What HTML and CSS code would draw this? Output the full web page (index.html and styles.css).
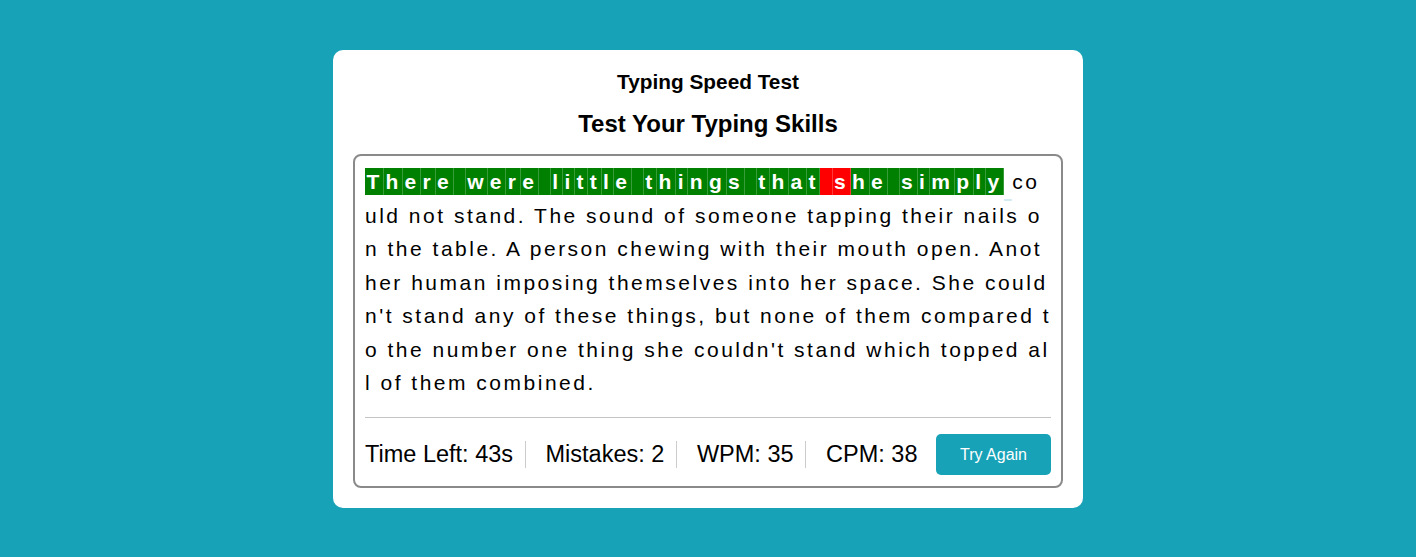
FILE: index.html
```html
<!DOCTYPE html>
<html lang="en">
<head>
<meta charset="utf-8">
<title>Typing Speed Test</title>
<link rel="stylesheet" href="styles.css">
</head>
<body>
<div class="wrapper">
  <h1 class="title">Typing Speed Test</h1>
  <h2 class="subtitle">Test Your Typing Skills</h2>
  <div class="content-box">
    <div class="typing-text">
      <p><span class="ok">T</span><span class="ok">h</span><span class="ok">e</span><span class="ok">r</span><span class="ok">e</span><span class="ok"> </span><span class="ok">w</span><span class="ok">e</span><span class="ok">r</span><span class="ok">e</span><span class="ok"> </span><span class="ok">l</span><span class="ok">i</span><span class="ok">t</span><span class="ok">t</span><span class="ok">l</span><span class="ok">e</span><span class="ok"> </span><span class="ok">t</span><span class="ok">h</span><span class="ok">i</span><span class="ok">n</span><span class="ok">g</span><span class="ok">s</span><span class="ok"> </span><span class="ok">t</span><span class="ok">h</span><span class="ok">a</span><span class="ok">t</span><span class="bad"> </span><span class="bad">s</span><span class="ok">h</span><span class="ok">e</span><span class="ok"> </span><span class="ok">s</span><span class="ok">i</span><span class="ok">m</span><span class="ok">p</span><span class="ok">l</span><span class="ok">y</span><span class="active"> </span>could not stand. The sound of someone tapping their nails on the table. A person chewing with their mouth open. Another human imposing themselves into her space. She couldn't stand any of these things, but none of them compared to the number one thing she couldn't stand which topped all of them combined.</p>
    </div>
    <div class="content">
      <ul class="result-details">
        <li>Time Left: <span>43</span>s</li>
        <li>Mistakes: <span>2</span></li>
        <li>WPM: <span>35</span></li>
        <li>CPM: <span>38</span></li>
      </ul>
      <button class="retry" type="button">Try Again</button>
    </div>
  </div>
</div>
</body>
</html>
```

FILE: styles.css
```css
* {
  margin: 0;
  padding: 0;
  box-sizing: border-box;
}

body {
  font-family: "Liberation Sans", Arial, sans-serif;
  background: #17a2b8;
  min-height: 100vh;
  padding-top: 1px;
  display: flex;
  align-items: center;
  justify-content: center;
  color: #000;
}

.wrapper {
  width: 750px;
  padding: 20px;
  background: #fff;
  border-radius: 10px;
}

.title {
  font-size: 20.8px;
  line-height: 23px;
  font-weight: bold;
  text-align: center;
  margin-bottom: 17px;
}

.subtitle {
  font-size: 24px;
  line-height: 27px;
  font-weight: bold;
  text-align: center;
  margin-bottom: 17px;
}

.content-box {
  border: 2px solid #8a8a8a;
  border-radius: 8px;
  padding: 9px 10px 11px;
}

.typing-text {
  margin-right: -1px;
}

.typing-text p {
  font-size: 21px;
  line-height: 33.6px;
  letter-spacing: 2.5px;
  word-break: break-all;
}

.typing-text .ok,
.typing-text .bad {
  color: #fff;
  font-weight: bold;
  background: #008000;
  padding: 2px 1.4px;
  border-right: 1px solid rgba(255, 255, 255, 0.22);
}

.typing-text .bad {
  background: #ff0000;
}

.typing-text .active {
  position: relative;
}

.typing-text .active::after {
  content: "";
  position: absolute;
  left: 0;
  right: 0;
  bottom: -8px;
  height: 2px;
  background: #d3ebf1;
}

.content {
  margin-top: 17px;
  border-top: 1px solid #c4c4c4;
  padding-top: 16px;
  display: flex;
  align-items: center;
}

.result-details {
  list-style: none;
  display: flex;
  align-items: center;
  gap: 11.5px;
}

.result-details li {
  font-size: 23.5px;
  line-height: 27px;
}

.result-details li + li {
  border-left: 1px solid #cccccc;
  padding-left: 20px;
}

.retry {
  margin-left: auto;
  width: 115px;
  height: 41px;
  border: none;
  border-radius: 5px;
  background: #17a2b8;
  color: #fff;
  font-family: inherit;
  font-size: 16px;
}
```
